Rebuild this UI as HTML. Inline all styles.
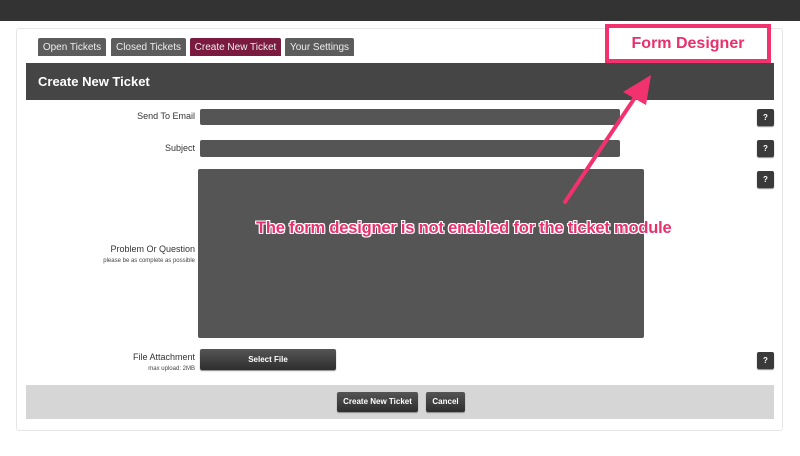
<!DOCTYPE html>
<html><head><meta charset="utf-8"><style>
*{margin:0;padding:0;box-sizing:border-box}
body{width:800px;height:456px;background:#fff;font-family:"Liberation Sans",sans-serif;position:relative;overflow:hidden}
.abs{position:absolute}
.top{left:0;top:0;width:800px;height:21px;background:#333}
.card{left:16px;top:28px;width:767px;height:403px;border:1px solid #e6e6e6;border-radius:3px;background:#fff}
.tab{top:38px;height:18px;background:#5c5c5c;color:#eee;font-size:10px;line-height:19px;text-align:center;border-radius:2px 2px 0 0}
.hdr{left:26px;top:63px;width:748px;height:37px;background:#454545;color:#fff;font-weight:bold;font-size:13px;line-height:37px;padding-left:12px}
.lbl{right:605px;font-size:9px;color:#333;text-align:right}
.sm{font-size:6px;color:#444}
.inp{background:#555;border-radius:2px}
.q{left:757px;width:17px;height:17px;background:#3a3a3a;border-radius:2px;color:#fff;font-size:8px;font-weight:bold;text-align:center;line-height:17px;box-shadow:0 1px 1px #888}
.btn{background:linear-gradient(#555,#2e2e2e);color:#fff;font-size:8px;font-weight:bold;text-align:center;border-radius:2px;box-shadow:0 1px 1px #888}
.foot{left:26px;top:385px;width:748px;height:34px;background:#d6d6d6}
</style></head><body>
<div class="abs top"></div>
<div class="abs card"></div>
<div class="abs tab" style="left:38px;width:68px">Open Tickets</div>
<div class="abs tab" style="left:111px;width:75px">Closed Tickets</div>
<div class="abs tab" style="left:190px;width:91px;background:#7a1a3e">Create New Ticket</div>
<div class="abs tab" style="left:285px;width:69px">Your Settings</div>
<div class="abs hdr">Create New Ticket</div>

<div class="abs lbl" style="top:111px">Send To Email</div>
<div class="abs inp" style="left:200px;top:109px;width:420px;height:16px"></div>
<div class="abs q" style="top:109px">?</div>

<div class="abs lbl" style="top:143px">Subject</div>
<div class="abs inp" style="left:200px;top:140px;width:420px;height:17px"></div>
<div class="abs q" style="top:140px">?</div>

<div class="abs lbl" style="top:244px">Problem Or Question<br><span class="sm">please be as complete as possible</span></div>
<div class="abs inp" style="left:198px;top:169px;width:446px;height:169px"></div>
<div class="abs q" style="top:171px">?</div>

<div class="abs lbl" style="top:352px">File Attachment<br><span class="sm">max upload: 2MB</span></div>
<div class="abs btn" style="left:200px;top:349px;width:136px;height:21px;line-height:21px">Select File</div>
<div class="abs q" style="top:352px">?</div>

<div class="abs foot"></div>
<div class="abs btn" style="left:337px;top:392px;width:81px;height:20px;line-height:20px">Create New Ticket</div>
<div class="abs btn" style="left:426px;top:392px;width:39px;height:20px;line-height:20px">Cancel</div>

<div class="abs" style="left:605px;top:24px;width:166px;height:39px;border:4px solid #f2316f;background:#fff;color:#e8306c;font-weight:bold;font-size:16px;text-align:center;line-height:31px">Form Designer</div>

<svg class="abs" style="left:0;top:0" width="800" height="456">
<line x1="565" y1="202" x2="636" y2="96" stroke="#f2316f" stroke-width="4" stroke-linecap="round"/>
<polygon points="651,75 623,92 646,105" fill="#f2316f"/>
</svg>

<div class="abs" style="left:256px;top:219px;font-size:16.5px;letter-spacing:-0.2px;font-weight:bold;color:#e8306c;text-shadow:1px 0 #fff,-1px 0 #fff,0 1px #fff,0 -1px #fff,1px 1px #fff,-1px -1px #fff,1px -1px #fff,-1px 1px #fff">The form designer is not enabled for the ticket module</div>
</body></html>
